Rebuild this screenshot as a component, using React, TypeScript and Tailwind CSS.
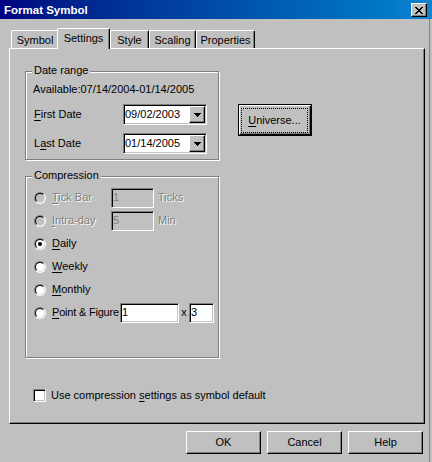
import React from 'react';

// classic win9x/2000 bevels
const sunken =
  'border border-t-[#808080] border-l-[#808080] border-b-white border-r-white shadow-[inset_1px_1px_0_#000,inset_-1px_-1px_0_#c0c0c0]';
const raised =
  'border border-t-white border-l-white border-b-black border-r-black shadow-[inset_-1px_-1px_0_#808080]';
const disabledText = 'text-[#808080] [text-shadow:1px_1px_0_#fff]';

const CloseGlyph: React.FC = () => (
  <svg width="8" height="7" viewBox="0 0 8 7" shapeRendering="crispEdges">
    <path
      d="M0 0h2v1H0zM6 0h2v1H6zM1 1h2v1H1zM5 1h2v1H5zM2 2h4v1H2zM3 3h2v1H3zM2 4h4v1H2zM1 5h2v1H1zM5 5h2v1H5zM0 6h2v1H0zM6 6h2v1H6z"
      fill="#000"
    />
  </svg>
);

const DownArrow: React.FC = () => (
  <svg width="7" height="4" viewBox="0 0 7 4" shapeRendering="crispEdges">
    <path d="M0 0h7v1H0zM1 1h5v1H1zM2 2h3v1H2zM3 3h1v1H3z" fill="#000" />
  </svg>
);

const GroupBox: React.FC<{ label: string; className?: string; children: React.ReactNode }> = ({
  label,
  className = '',
  children,
}) => (
  <div
    className={`relative border border-[#808080] shadow-[1px_1px_0_#fff,inset_1px_1px_0_#fff] ${className}`}
  >
    <span className="absolute left-[6px] top-[-8px] bg-[#c0c0c0] px-[2px]">{label}</span>
    {children}
  </div>
);

const Radio: React.FC<{ checked?: boolean; disabled?: boolean }> = ({ checked, disabled }) => (
  <span className="flex w-[12px] h-[12px] shrink-0 rounded-full border border-t-[#808080] border-l-[#808080] border-b-white border-r-white">
    <span
      className={`flex flex-1 items-center justify-center rounded-full border border-t-black border-l-black border-b-[#dfdfdf] border-r-[#dfdfdf] ${
        disabled ? 'bg-[#c0c0c0]' : 'bg-white'
      }`}
    >
      {checked && <span className="w-[4px] h-[4px] rounded-full bg-black" />}
    </span>
  </span>
);

const Combo: React.FC<{ value: string }> = ({ value }) => (
  <div className={`flex items-center w-[84px] h-[21px] bg-white ${sunken} pl-[1px] pr-[1px]`}>
    <span className="flex-1">{value}</span>
    <span className={`flex items-center justify-center w-[16px] h-[17px] bg-[#c0c0c0] ${raised}`}>
      <DownArrow />
    </span>
  </div>
);

const Edit: React.FC<{ value: string; width: string; disabled?: boolean }> = ({ value, width, disabled }) => (
  <div
    className={`flex items-center h-[20px] ${width} ${sunken} pl-[1px] ${
      disabled ? 'bg-[#c0c0c0] text-[#808080]' : 'bg-white'
    }`}
  >
    {value}
  </div>
);

const PushButton: React.FC<{ children: React.ReactNode }> = ({ children }) => (
  <div className={`flex items-center justify-center w-[75px] h-[23px] bg-[#c0c0c0] ${raised}`}>{children}</div>
);

const compressionRows = [
  { label: 'Tick Bar', key: 'T', rest: 'ick Bar', disabled: true, unit: 'Ticks', value: '1' },
  { label: 'Intra-day', key: 'I', rest: 'ntra-day', disabled: true, unit: 'Min', value: '5' },
  { label: 'Daily', key: 'D', rest: 'aily', checked: true },
  { label: 'Weekly', key: 'W', rest: 'eekly' },
  { label: 'Monthly', key: 'M', rest: 'onthly' },
];

export default function App() {
  return (
    <div className="w-[432px] h-[462px] bg-[#c0c0c0] overflow-hidden flex flex-col font-['Liberation_Sans',Arial,sans-serif] text-[11px] leading-[13px] text-black">
      {/* title bar */}
      <div className="h-[19px] shrink-0 flex items-center bg-linear-to-r from-[#000080] to-[#1084d0] pl-[4px] pr-[5px]">
        <span className="flex-1 text-white font-bold text-[11.5px] leading-[14px]">Format Symbol</span>
        <span className={`flex items-center justify-center w-[16px] h-[14px] mt-[1px] bg-[#c0c0c0] ${raised}`}>
          <CloseGlyph />
        </span>
      </div>

      <div className="flex-1 w-[430px] border-r border-[#808080] pl-[9px]">
        {/* tabs */}
        <div className="flex items-end h-[20px] mt-[9px] pl-[2px]">
          <div className="flex items-center justify-center pt-[1px] w-[48px] h-[18px] rounded-t-[2px] border-t border-l border-r border-t-white border-l-white border-r-black shadow-[inset_-1px_0_0_#808080]">
            Symbol
          </div>
          <div className="relative z-10 -ml-[2px] mb-[-1px] flex items-start justify-center pt-[3px] w-[53px] h-[21px] bg-[#c0c0c0] rounded-t-[2px] border-t border-l border-r border-t-white border-l-white border-r-black shadow-[inset_-1px_0_0_#808080]">
            Settings
          </div>
          <div className="flex items-center justify-center pt-[1px] w-[39px] h-[18px] rounded-t-[2px] border-t border-l border-r border-t-white border-l-white border-r-black shadow-[inset_-1px_0_0_#808080]">
            Style
          </div>
          <div className="flex items-center justify-center pt-[1px] w-[47px] h-[18px] rounded-t-[2px] border-t border-l border-r border-t-white border-l-white border-r-black shadow-[inset_-1px_0_0_#808080]">
            Scaling
          </div>
          <div className="flex items-center justify-center pt-[1px] w-[59px] h-[18px] rounded-t-[2px] border-t border-l border-r border-t-white border-l-white border-r-black shadow-[inset_-1px_0_0_#808080]">
            Properties
          </div>
        </div>

        {/* tab page */}
        <div className={`w-[416px] h-[376px] flex flex-col pl-[15px] pt-[22px] ${raised}`}>
          <div className="flex items-start">
            <GroupBox label="Date range" className="w-[194px] h-[89px] flex flex-col pl-[7px] pt-[11px]">
              <span>Available:07/14/2004-01/14/2005</span>
              <div className="flex items-center mt-[8px] h-[21px]">
                <span className="w-[90px] pl-[1px]">
                  <u className="underline-offset-2">F</u>irst Date
                </span>
                <Combo value="09/02/2003" />
              </div>
              <div className="flex items-center mt-[8px] h-[21px]">
                <span className="w-[90px] pl-[1px]">
                  L<u className="underline-offset-2">a</u>st Date
                </span>
                <Combo value="01/14/2005" />
              </div>
            </GroupBox>

            <div className="ml-[19px] mt-[33px] w-[74px] h-[32px] border border-black">
              <div className="h-full border border-t-white border-l-white border-b-black border-r-black shadow-[inset_-1px_-1px_0_#808080] pt-[2px] pl-[1px] pr-[2px] pb-[1px]">
                <div className="h-full flex items-center justify-center border border-dotted border-black">
                  <span>
                    <u className="underline-offset-2">U</u>niverse...
                  </span>
                </div>
              </div>
            </div>
          </div>

          <GroupBox label="Compression" className="mt-[16px] w-[194px] h-[182px] flex flex-col pl-[8px] pt-[9px]">
            {compressionRows.map((row) => (
              <div key={row.label} className="flex items-center h-[23px]">
                <Radio checked={row.checked} disabled={row.disabled} />
                <span className={`ml-[6px] w-[59px] ${row.disabled ? disabledText : ''}`}>
                  <u className="underline-offset-2">{row.key}</u>
                  {row.rest}
                </span>
                {row.unit && (
                  <>
                    <Edit value={row.value!} width="w-[43px]" disabled />
                    <span className={`ml-[4px] ${disabledText}`}>{row.unit}</span>
                  </>
                )}
              </div>
            ))}
            <div className="flex items-center h-[23px]">
              <Radio />
              <span className="ml-[6px] w-[68px] whitespace-nowrap tracking-[-0.2px]">
                <u className="underline-offset-2">P</u>oint &amp; Figure
              </span>
              <Edit value="1" width="w-[59px]" />
              <span className="w-[10px] text-center">x</span>
              <Edit value="3" width="w-[25px]" />
            </div>
          </GroupBox>

          <div className="flex items-center mt-[31px] ml-[8px] h-[13px]">
            <span className={`w-[13px] h-[13px] bg-white ${sunken}`} />
            <span className="ml-[5px]">
              Use compression <u className="underline-offset-2">s</u>ettings as symbol default
            </span>
          </div>
        </div>

        {/* dialog buttons */}
        <div className="flex justify-end gap-[6px] mt-[7px] w-[416px] pr-[2px]">
          <PushButton>OK</PushButton>
          <PushButton>Cancel</PushButton>
          <PushButton>Help</PushButton>
        </div>
      </div>
    </div>
  );
}
